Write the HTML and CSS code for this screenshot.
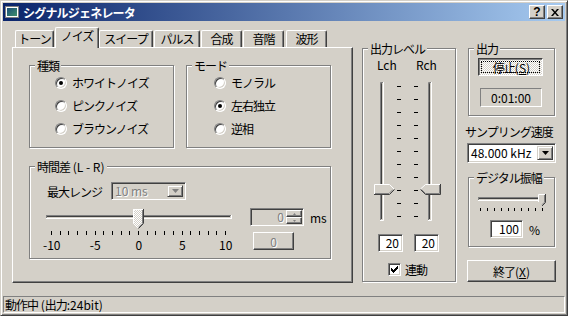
FILE: index.html
```html
<!DOCTYPE html>
<html lang="ja">
<head>
  <meta charset="UTF-8">
  <title>シグナルジェネレータ</title>
  <link rel="stylesheet" href="styles.css">
</head>
<body>
<div class="window">
  <div class="titlebar">
    <svg class="app-icon" width="16" height="16" viewBox="0 0 16 16">
      <defs>
        <linearGradient id="ig" x1="0" y1="0" x2="1" y2="1">
          <stop offset="0" stop-color="#1d4f7a"/>
          <stop offset="1" stop-color="#3f8f6a"/>
        </linearGradient>
      </defs>
      <rect x="1.5" y="2.5" width="13" height="11" fill="#fff" stroke="#808080"/>
      <rect x="3" y="4" width="10" height="8" fill="url(#ig)"/>
    </svg>
    <span class="title">シグナルジェネレータ</span>
    <span class="cbtn">?</span>
    <span class="cbtn">
      <svg width="8" height="7" viewBox="0 0 8 7"><path d="M0 0H2L4 2.5 6 0H8L5 3.5 8 7H6L4 4.5 2 7H0L3 3.5Z"/></svg>
    </span>
  </div>

  <div class="client">
    <div class="tabctl">
      <div class="tabstrip">
        <div class="tab" style="width:39px">トーン</div>
        <div class="tab sel" style="width:44px">ノイズ</div>
        <div class="tab" style="width:54px">スイープ</div>
        <div class="tab" style="width:46px">パルス</div>
        <div class="tab" style="width:41px">合成</div>
        <div class="tab gap2" style="width:41px">音階</div>
        <div class="tab" style="width:41px">波形</div>
      </div>
      <div class="panel">
        <div class="group g-kind">
          <span class="gtitle">種類</span>
          <div class="opt"><span class="radio on"></span>ホワイトノイズ</div>
          <div class="opt"><span class="radio"></span>ピンクノイズ</div>
          <div class="opt"><span class="radio"></span>ブラウンノイズ</div>
        </div>
        <div class="group g-mode">
          <span class="gtitle">モード</span>
          <div class="opt"><span class="radio"></span>モノラル</div>
          <div class="opt"><span class="radio on"></span>左右独立</div>
          <div class="opt"><span class="radio"></span>逆相</div>
        </div>
        <div class="group g-delay">
          <span class="gtitle">時間差<span class="num"> (L - R)</span></span>
          <div class="range-row">
            <span class="range-label">最大レンジ</span>
            <div class="combo disabled">
              <span class="combo-text num">10 ms</span>
              <span class="drop">
                <svg width="7" height="4" viewBox="0 0 7 4"><path d="M0 0H7L3.5 4Z" fill="#808080"/></svg>
              </span>
            </div>
          </div>
          <div class="slider-row">
            <div class="slider-col">
              <svg class="delay-slider" width="188" height="28" viewBox="0 0 188 28">
                <defs>
                  <pattern id="dith" width="2" height="2" patternUnits="userSpaceOnUse">
                    <rect width="2" height="2" fill="#D4D0C8"/>
                    <rect width="1" height="1" fill="#fff"/>
                    <rect x="1" y="1" width="1" height="1" fill="#fff"/>
                  </pattern>
                </defs>
                <g fill="none">
                  <path d="M2 7.5H187M2.5 7V11" stroke="#808080"/>
                  <path d="M3 8.5H186" stroke="#404040"/>
                  <path d="M2 10.5H188M187.5 7V11" stroke="#fff"/>
                </g>
                <g fill="#000">
                  <rect x="7" y="23" width="1" height="4"/><rect x="16" y="23" width="1" height="4"/>
                  <rect x="24" y="23" width="1" height="4"/><rect x="33" y="23" width="1" height="4"/>
                  <rect x="42" y="23" width="1" height="4"/><rect x="51" y="23" width="1" height="4"/>
                  <rect x="59" y="23" width="1" height="4"/><rect x="68" y="23" width="1" height="4"/>
                  <rect x="77" y="23" width="1" height="4"/><rect x="85" y="23" width="1" height="4"/>
                  <rect x="94" y="23" width="1" height="4"/><rect x="103" y="23" width="1" height="4"/>
                  <rect x="111" y="23" width="1" height="4"/><rect x="120" y="23" width="1" height="4"/>
                  <rect x="129" y="23" width="1" height="4"/><rect x="138" y="23" width="1" height="4"/>
                  <rect x="146" y="23" width="1" height="4"/><rect x="155" y="23" width="1" height="4"/>
                  <rect x="164" y="23" width="1" height="4"/><rect x="172" y="23" width="1" height="4"/>
                  <rect x="181" y="23" width="1" height="4"/>
                </g>
                <polygon points="89,1 100,1 100,15 94.5,20.5 89,15" fill="url(#dith)"/>
                <g fill="none">
                  <path d="M89.5 15.5V1.5H99M89.5 15.5L94 20" stroke="#fff"/>
                  <path d="M99.5 1V15.5L94.5 20.5" stroke="#404040"/>
                  <path d="M98.5 2V15.3L94.5 19.3" stroke="#808080"/>
                </g>
              </svg>
              <div class="tick-labels num">
                <span>-10</span><span>-5</span><span>0</span><span>5</span><span>10</span>
              </div>
            </div>
            <div class="spin-col">
              <div class="spin-line">
                <div class="spin">
                  <span class="spin-val num">0</span>
                  <span class="spin-btns">
                    <span class="sbtn"><svg width="3" height="2" viewBox="0 0 3 2"><path d="M0 2H3L1.5 0Z" fill="#808080"/></svg></span>
                    <span class="sbtn"><svg width="3" height="2" viewBox="0 0 3 2"><path d="M0 0H3L1.5 2Z" fill="#808080"/></svg></span>
                  </span>
                </div>
                <span class="unit num">ms</span>
              </div>
              <div class="btn zero-btn disabled-text num">0</div>
            </div>
          </div>
        </div>
      </div>
    </div>

    <div class="group g-level">
      <span class="gtitle">出力レベル</span>
      <div class="ch-labels num"><span>Lch</span><span>Rch</span></div>
      <svg class="meter" width="76" height="147" viewBox="0 0 76 147">
        <g fill="none">
          <path d="M10.5 142V4.5H13M58.5 142V4.5H61" stroke="#808080"/>
          <path d="M11.5 141V5.5H12M59.5 141V5.5H60" stroke="#404040"/>
          <path d="M13.5 4V142.5H10M61.5 4V142.5H58" stroke="#fff"/>
        </g>
        <g fill="#000">
          <rect x="27" y="8" width="4" height="1"/><rect x="44" y="8" width="4" height="1"/>
          <rect x="27" y="21" width="4" height="1"/><rect x="44" y="21" width="4" height="1"/>
          <rect x="27" y="34" width="4" height="1"/><rect x="44" y="34" width="4" height="1"/>
          <rect x="27" y="47" width="4" height="1"/><rect x="44" y="47" width="4" height="1"/>
          <rect x="27" y="60" width="4" height="1"/><rect x="44" y="60" width="4" height="1"/>
          <rect x="27" y="73" width="4" height="1"/><rect x="44" y="73" width="4" height="1"/>
          <rect x="27" y="86" width="4" height="1"/><rect x="44" y="86" width="4" height="1"/>
          <rect x="27" y="99" width="4" height="1"/><rect x="44" y="99" width="4" height="1"/>
          <rect x="27" y="112" width="4" height="1"/><rect x="44" y="112" width="4" height="1"/>
          <rect x="27" y="125" width="4" height="1"/><rect x="44" y="125" width="4" height="1"/>
          <rect x="27" y="138" width="4" height="1"/><rect x="44" y="138" width="4" height="1"/>
        </g>
        <polygon points="4,106 20,106 25,111 20,117 4,117" fill="#D4D0C8"/>
        <g fill="none">
          <path d="M4.5 116V106.5H19.5L24 111" stroke="#fff"/>
          <path d="M4 116.5H19.5L24.5 111.5" stroke="#404040"/>
          <path d="M5 115.5H19L23 111.5" stroke="#808080"/>
        </g>
        <polygon points="50,111 55,106 71,106 71,117 55,117" fill="#D4D0C8"/>
        <g fill="none">
          <path d="M50.5 111L55.5 106.5H70" stroke="#fff"/>
          <path d="M70.5 106V116.5H55.5L50.5 111.5" stroke="#404040"/>
          <path d="M69.5 107V115.5H55.5L51.5 111.5" stroke="#808080"/>
        </g>
      </svg>
      <div class="level-edits num">
        <div class="edit">20</div>
        <div class="edit">20</div>
      </div>
      <div class="link">
        <span class="check">
          <svg width="11" height="11" viewBox="0 0 11 11" fill="#000">
            <rect x="2" y="4" width="1" height="3"/><rect x="3" y="5" width="1" height="3"/>
            <rect x="4" y="6" width="1" height="3"/><rect x="5" y="5" width="1" height="3"/>
            <rect x="6" y="4" width="1" height="3"/><rect x="7" y="3" width="1" height="3"/>
            <rect x="8" y="2" width="1" height="3"/>
          </svg>
        </span>
        <span>連動</span>
      </div>
    </div>

    <div class="rightcol">
      <div class="group g-out">
        <span class="gtitle">出力</span>
        <div class="stop-btn"><span class="focus">停止<span class="num">(<u>S</u>)</span></span></div>
        <div class="time num">0:01:00</div>
      </div>
      <div class="rate-label">サンプリング速度</div>
      <div class="combo combo-rate">
        <span class="combo-text num">48.000 kHz</span>
        <span class="drop">
          <svg width="7" height="4" viewBox="0 0 7 4"><path d="M0 0H7L3.5 4Z" fill="#000"/></svg>
        </span>
      </div>
      <div class="group g-amp">
        <span class="gtitle">デジタル振幅</span>
        <svg class="amp-slider" width="72" height="20" viewBox="0 0 72 20">
          <g fill="none">
            <path d="M2 5.5H69M2.5 5V9" stroke="#808080"/>
            <path d="M3 6.5H68" stroke="#404040"/>
            <path d="M2 8.5H70M69.5 5V9" stroke="#fff"/>
          </g>
          <g fill="#000">
            <rect x="4" y="16" width="1" height="3"/><rect x="11" y="16" width="1" height="3"/>
            <rect x="18" y="16" width="1" height="3"/><rect x="25" y="16" width="1" height="3"/>
            <rect x="32" y="16" width="1" height="3"/><rect x="38" y="16" width="1" height="3"/>
            <rect x="45" y="16" width="1" height="3"/><rect x="52" y="16" width="1" height="3"/>
            <rect x="59" y="16" width="1" height="3"/><rect x="66" y="16" width="1" height="3"/>
          </g>
          <polygon points="62,2 70,2 70,10 66,14 62,10" fill="#D4D0C8"/>
          <g fill="none">
            <path d="M62.5 10V2.5H69" stroke="#fff"/>
            <path d="M69.5 2V10.5L66 14" stroke="#404040"/>
            <path d="M68.5 3V10.2L66 12.7" stroke="#808080"/>
          </g>
        </svg>
        <div class="amp-row">
          <div class="edit amp-edit num">100</div>
          <span class="unit num">%</span>
        </div>
      </div>
      <div class="btn quit-btn">終了<span class="num">(<u>X</u>)</span></div>
    </div>
  </div>

  <div class="statusbar">動作中<span class="num"> (</span>出力<span class="num">:24bit)</span></div>
</div>
</body>
</html>
```

FILE: styles.css
```css
* {
  box-sizing: border-box;
}
body {
  margin: 0;
  background: #D4D0C8;
  font-family: "Noto Sans CJK JP", sans-serif;
  font-size: 12px;
  line-height: 13px;
  color: #000;
  letter-spacing: -1px;
}
.num {
  letter-spacing: 0;
}
u {
  text-decoration: underline;
  text-underline-offset: 1px;
}

/* window frame */
.window {
  width: 568px;
  height: 316px;
  border: 1px solid;
  border-color: #D4D0C8 #404040 #404040 #D4D0C8;
  box-shadow: inset 1px 1px #fff, inset -1px -1px #808080;
  padding: 2px;
  display: flex;
  flex-direction: column;
}
.titlebar {
  height: 18px;
  flex: none;
  display: flex;
  align-items: center;
  padding: 0 2px 0 1px;
  background: linear-gradient(to right, #0A246A, #A6CAF0);
  color: #fff;
}
.app-icon {
  margin-right: 3px;
  flex: none;
}
.title {
  flex: 1;
  font-weight: bold;
  letter-spacing: -0.8px;
}
.cbtn {
  width: 16px;
  height: 14px;
  margin-left: 2px;
  display: flex;
  align-items: center;
  justify-content: center;
  background: #D4D0C8;
  border: 1px solid;
  border-color: #fff #404040 #404040 #fff;
  box-shadow: inset -1px -1px #808080;
  color: #000;
  font-family: "Liberation Sans", sans-serif;
  font-weight: bold;
  font-size: 12px;
  letter-spacing: 0;
}

.client {
  height: 275px;
  flex: none;
  display: flex;
  align-items: flex-start;
  padding-left: 9px;
}

/* tabs */
.tabctl {
  width: 341px;
  margin-top: 6px;
}
.tabstrip {
  display: flex;
  align-items: flex-end;
  height: 20px;
  padding-left: 3px;
}
.tab {
  height: 17px;
  margin-right: 1px;
  text-align: center;
  line-height: 15px;
  white-space: nowrap;
  border-top: 1px solid #fff;
  border-left: 1px solid #fff;
  border-right: 1px solid #404040;
  box-shadow: inset -1px 0 #808080;
  border-radius: 2px 2px 0 0;
  background: #D4D0C8;
}
.tab.sel {
  height: 21px;
  margin-right: 0;
  margin-bottom: -1px;
  position: relative;
  z-index: 1;
}
.tab.gap2 {
  margin-right: 2px;
}
.panel {
  height: 236px;
  border: 1px solid;
  border-color: #fff #404040 #404040 #fff;
  box-shadow: inset -1px -1px #808080;
  padding: 17px 0 0 16px;
  display: grid;
  grid-template-columns: 145px 145px;
  column-gap: 12px;
  row-gap: 18px;
  align-content: start;
}

/* group boxes */
.group {
  position: relative;
  border: 1px solid #808080;
  box-shadow: inset 1px 1px #fff, 1px 1px #fff;
}
.gtitle {
  position: absolute;
  top: -7px;
  left: 5px;
  padding: 0 2px;
  background: #D4D0C8;
  white-space: nowrap;
}
.g-kind,
.g-mode {
  height: 83px;
  padding: 5px 0 0 25px;
}
.g-mode {
  padding-left: 27px;
}
.opt {
  display: flex;
  align-items: center;
  height: 23px;
  white-space: nowrap;
}
.radio {
  flex: none;
  width: 12px;
  height: 12px;
  margin-right: 5px;
  border-radius: 50%;
  border: 1px solid;
  border-color: #808080 #fff #fff #808080;
  box-shadow: inset 1px 1px #404040, inset -1px -1px #D4D0C8;
  background: #fff;
  position: relative;
}
.radio.on::after {
  content: "";
  position: absolute;
  left: 3px;
  top: 3px;
  width: 4px;
  height: 4px;
  border-radius: 50%;
  background: #000;
}

.g-delay {
  grid-column: 1 / 3;
  height: 93px;
  padding-top: 15px;
}
.range-row {
  display: flex;
  align-items: center;
  height: 18px;
  padding-left: 17px;
}
.range-label {
  width: 64px;
}
.combo {
  display: flex;
  align-items: stretch;
  border: 1px solid;
  border-color: #808080 #fff #fff #808080;
  box-shadow: inset 1px 1px #404040, inset -1px -1px #D4D0C8;
  padding: 2px;
  background: #fff;
}
.combo.disabled {
  width: 75px;
  height: 18px;
  background: #D4D0C8;
  color: #808080;
}
.combo.disabled .combo-text {
  text-shadow: 1px 1px #fff;
}
.combo-text {
  flex: 1;
  padding-left: 1px;
  line-height: 12px;
  white-space: nowrap;
}
.drop {
  width: 16px;
  flex: none;
  display: flex;
  align-items: center;
  justify-content: center;
  background: #D4D0C8;
  border: 1px solid;
  border-color: #D4D0C8 #404040 #404040 #D4D0C8;
  box-shadow: inset 1px 1px #fff, inset -1px -1px #808080;
}
.slider-row {
  display: flex;
  margin-top: 8px;
}
.slider-col {
  width: 220px;
}
.delay-slider {
  display: block;
  margin-left: 14px;
}
.tick-labels {
  display: grid;
  grid-template-columns: repeat(5, 43.5px);
  margin-top: 2px;
  text-align: center;
}
.spin-line {
  display: flex;
  align-items: center;
}
.spin {
  width: 54px;
  height: 18px;
  display: flex;
  border: 1px solid;
  border-color: #808080 #fff #fff #808080;
  box-shadow: inset 1px 1px #404040, inset -1px -1px #D4D0C8;
  padding: 1px 1px 1px 2px;
  background: #D4D0C8;
}
.spin-val {
  flex: 1;
  text-align: right;
  padding-right: 2px;
  line-height: 14px;
  color: #808080;
  text-shadow: 1px 1px #fff;
}
.spin-btns {
  width: 16px;
  display: flex;
  flex-direction: column;
}
.sbtn {
  flex: 1;
  display: flex;
  align-items: center;
  justify-content: center;
  border: 1px solid;
  border-color: #fff #404040 #404040 #fff;
  box-shadow: inset -1px -1px #808080;
}
.unit {
  margin-left: 6px;
}
.btn {
  display: flex;
  align-items: center;
  justify-content: center;
  background: #D4D0C8;
  border: 1px solid;
  border-color: #fff #404040 #404040 #fff;
  box-shadow: inset -1px -1px #808080;
  white-space: nowrap;
}
.disabled-text {
  color: #808080;
  text-shadow: 1px 1px #fff;
}
.zero-btn {
  width: 41px;
  height: 18px;
  margin: 6px 0 0 3px;
}

/* output level */
.g-level {
  flex: none;
  width: 94px;
  height: 234px;
  margin: 27px 0 0 9px;
}
.ch-labels {
  display: flex;
  margin: 9px 0 0 14px;
}
.ch-labels span {
  width: 41px;
}
.meter {
  display: block;
  margin: 7px 0 0 7px;
}
.level-edits {
  display: flex;
  gap: 11px;
  margin: 9px 0 0 15px;
}
.edit {
  width: 25px;
  height: 18px;
  border: 1px solid;
  border-color: #808080 #fff #fff #808080;
  box-shadow: inset 1px 1px #404040, inset -1px -1px #D4D0C8;
  background: #fff;
  text-align: right;
  padding-right: 3px;
  line-height: 16px;
}
.link {
  display: flex;
  align-items: center;
  margin: 11px 0 0 25px;
}
.check {
  width: 13px;
  height: 13px;
  margin-right: 4px;
  border: 1px solid;
  border-color: #808080 #fff #fff #808080;
  box-shadow: inset 1px 1px #404040, inset -1px -1px #D4D0C8;
  background: #fff;
}
.check svg {
  display: block;
}

/* right column */
.rightcol {
  flex: none;
  width: 91px;
  margin-left: 9px;
}
.g-out {
  width: 87px;
  height: 68px;
  margin: 27px 0 0 3px;
}
.stop-btn {
  width: 65px;
  height: 18px;
  margin: 9px 0 0 9px;
  padding: 2px;
  border: 1px solid;
  border-color: #404040 #fff #fff #404040;
  box-shadow: inset 1px 1px #808080;
  background: repeating-conic-gradient(#fff 0 25%, #D4D0C8 0 50%) 0 0 / 2px 2px;
  display: flex;
}
.focus {
  flex: 1;
  border: 1px dotted #000;
  display: flex;
  align-items: center;
  justify-content: center;
  padding-top: 1px;
  padding-left: 2px;
  white-space: nowrap;
}
.time {
  width: 62px;
  height: 19px;
  margin: 12px 0 0 11px;
  border: 1px solid;
  border-color: #808080 #fff #fff #808080;
  text-align: center;
  line-height: 17px;
}
.rate-label {
  margin-top: 9px;
  white-space: nowrap;
}
.combo-rate {
  width: 89px;
  height: 20px;
  margin: 5px 0 0 2px;
}
.combo-rate .combo-text {
  line-height: 14px;
}
.g-amp {
  width: 87px;
  height: 70px;
  margin: 14px 0 0 3px;
}
.amp-slider {
  display: block;
  margin: 14px 0 0 7px;
}
.amp-row {
  display: flex;
  align-items: center;
  margin: 8px 0 0 21px;
}
.amp-edit {
  width: 33px;
}
.quit-btn {
  width: 89px;
  height: 22px;
  margin: 13px 0 0 2px;
}

.statusbar {
  height: 17px;
  flex: none;
  border: 1px solid;
  border-color: #808080 #fff #fff #808080;
  padding-left: 1px;
  line-height: 15px;
  white-space: nowrap;
}
```
